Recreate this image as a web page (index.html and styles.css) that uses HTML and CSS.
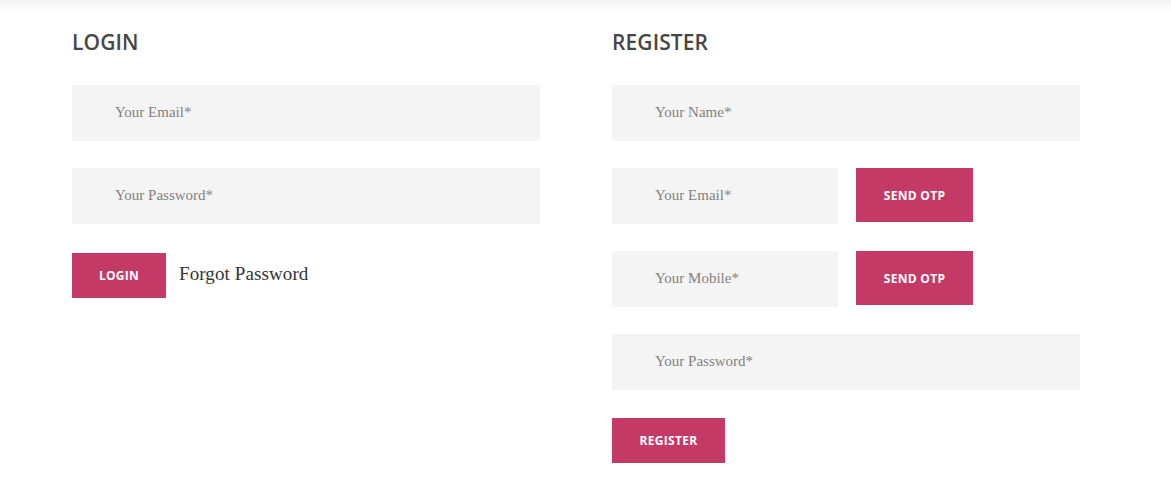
FILE: index.html
```html
<!DOCTYPE html>
<html lang="en">
<head>
<meta charset="utf-8">
<title>Login / Register</title>
<link rel="stylesheet" href="styles.css">
</head>
<body>
<div class="topshade"></div>
<main class="wrap">
  <section class="col">
    <h2 class="title">LOGIN</h2>
    <form class="form">
      <input class="field" type="email" placeholder="Your Email*">
      <input class="field" type="password" placeholder="Your Password*">
      <div class="actions">
        <button class="btn btn-login" type="button">LOGIN</button>
        <a class="forgot" href="#">Forgot Password</a>
      </div>
    </form>
  </section>
  <section class="col">
    <h2 class="title">REGISTER</h2>
    <form class="form">
      <input class="field" type="text" placeholder="Your Name*">
      <div class="row">
        <input class="field field-short" type="email" placeholder="Your Email*">
        <button class="btn btn-otp" type="button">SEND OTP</button>
      </div>
      <div class="row">
        <input class="field field-short" type="tel" placeholder="Your Mobile*">
        <button class="btn btn-otp" type="button">SEND OTP</button>
      </div>
      <input class="field" type="password" placeholder="Your Password*">
      <div class="actions">
        <button class="btn btn-register" type="button">REGISTER</button>
      </div>
    </form>
  </section>
</main>
</body>
</html>
```

FILE: styles.css
```css
html, body {
  margin: 0;
  padding: 0;
  background: #fff;
}
body {
  position: relative;
  height: 492px;
  overflow: hidden;
}
.topshade {
  position: absolute;
  left: 0;
  right: 0;
  top: 0;
  height: 12px;
  background: linear-gradient(to bottom, #f3f3f3, rgba(255,255,255,0));
}
.wrap {
  display: flex;
  gap: 72px;
  padding: 30px 0 0 72px;
}
.col {
  width: 468px;
}
.title {
  margin: 0 0 30px;
  font-family: "Open Sans", sans-serif;
  font-weight: 600;
  font-size: 21px;
  line-height: 25px;
  color: #464646;
  letter-spacing: 0.1px;
}
.form {
  display: flex;
  flex-direction: column;
  gap: 27px;
  margin: 0;
}
.field {
  display: block;
  box-sizing: border-box;
  width: 468px;
  height: 56px;
  border: 0;
  outline: none;
  background: #f4f4f4;
  padding: 0 0 2px 43px;
  font-family: "Liberation Serif", serif;
  font-size: 15px;
  color: #333;
}
.field::placeholder {
  color: #867f7c;
  opacity: 1;
}
.field-short {
  width: 226px;
}
.row {
  display: flex;
  align-items: flex-start;
  gap: 18px;
}
.actions {
  display: flex;
  align-items: center;
  gap: 13px;
  margin-top: 2px;
}
.btn {
  border: 0;
  margin: 0;
  padding: 0;
  background: #c43a67;
  color: #fff;
  font-family: "Open Sans", sans-serif;
  font-weight: 700;
  font-size: 12px;
  letter-spacing: 0.3px;
  cursor: pointer;
}
.btn-login {
  width: 94px;
  height: 45px;
}
.btn-register {
  width: 113px;
  height: 45px;
  margin-top: -1px;
}
.btn-otp {
  width: 117px;
  height: 54px;
}
.forgot {
  font-family: "Liberation Serif", serif;
  font-size: 19px;
  letter-spacing: 0.1px;
  color: #333;
  text-decoration: none;
  margin-top: -4px;
}
```
